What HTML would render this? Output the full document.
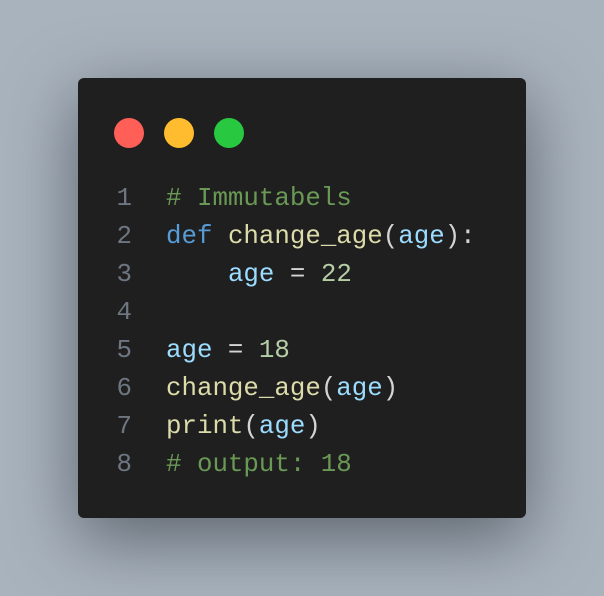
<!DOCTYPE html>
<html><head><meta charset="utf-8"><style>
html,body{margin:0;padding:0;}
body{width:604px;height:596px;background:#a9b3bd;position:relative;overflow:hidden;font-family:"Liberation Mono",monospace;}
.card{position:absolute;left:78px;top:78px;width:448px;height:440px;background:#1f1f1f;border-radius:6px;box-shadow:0 20px 70px rgba(40,45,55,0.6);}
.dot{position:absolute;top:40px;width:30px;height:30px;border-radius:50%;}
.code{position:absolute;left:0;top:102px;font-size:25.8px;line-height:38px;white-space:pre;}
.ln{position:absolute;top:0;left:22px;width:32px;text-align:right;color:#6e7681;}
.tx{position:absolute;top:0;left:88px;color:#d4d4d4;}
.c{color:#6a9955}.k{color:#569cd6}.f{color:#dcdcaa}.v{color:#9cdcfe}.n{color:#b5cea8}
</style></head><body>
<div class="card">
<div class="dot" style="left:36px;background:#ff5f57"></div>
<div class="dot" style="left:86px;background:#febc2e"></div>
<div class="dot" style="left:136px;background:#28c840"></div>
<div class="code"><div class="ln">1
2
3
4
5
6
7
8</div><div class="tx"><span class="c"># Immutabels</span>
<span class="k">def</span> <span class="f">change_age</span>(<span class="v">age</span>):
    <span class="v">age</span> = <span class="n">22</span>

<span class="v">age</span> = <span class="n">18</span>
<span class="f">change_age</span>(<span class="v">age</span>)
<span class="f">print</span>(<span class="v">age</span>)
<span class="c"># output: 18</span></div></div>
</div>
</body></html>
